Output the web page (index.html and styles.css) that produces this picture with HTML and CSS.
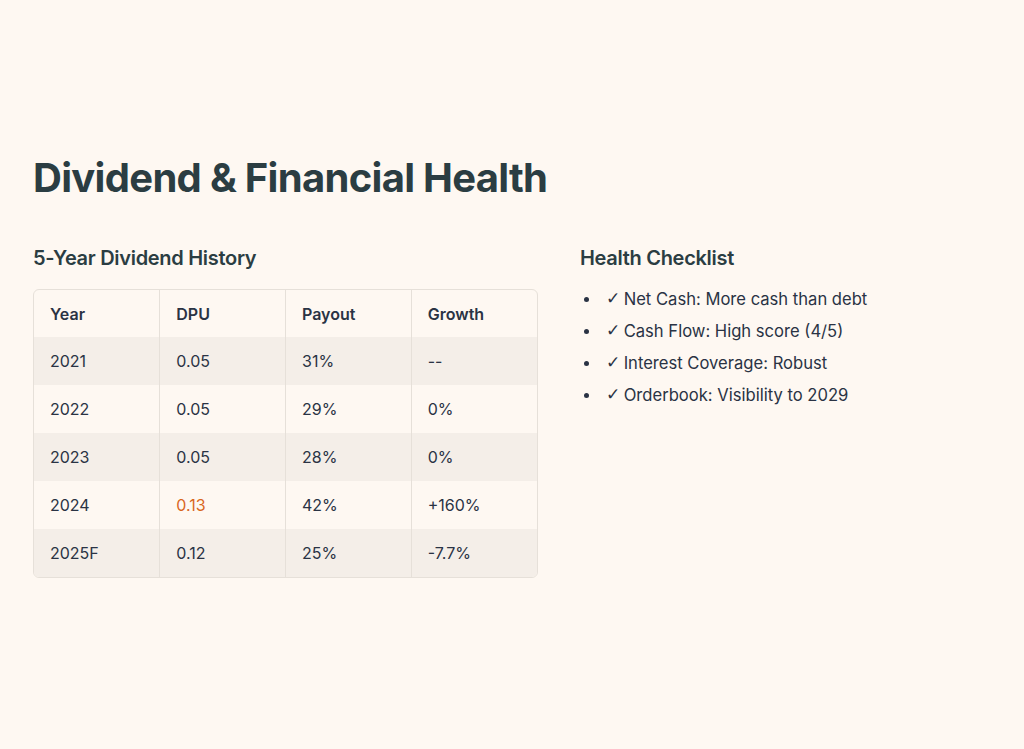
FILE: index.html
```html
<!DOCTYPE html>
<html lang="en">
<head>
<meta charset="utf-8">
<title>Dividend &amp; Financial Health</title>
<link rel="stylesheet" href="styles.css">
</head>
<body>
<main class="page">
  <h1 class="title">Dividend &amp; Financial Health</h1>
  <div class="columns">
    <section class="col-left">
      <h2 class="subtitle">5-Year Dividend History</h2>
      <div class="table-wrap">
        <table class="div-table">
          <thead>
            <tr><th>Year</th><th>DPU</th><th>Payout</th><th>Growth</th></tr>
          </thead>
          <tbody>
            <tr><td>2021</td><td>0.05</td><td>31%</td><td>--</td></tr>
            <tr><td>2022</td><td>0.05</td><td>29%</td><td>0%</td></tr>
            <tr><td>2023</td><td>0.05</td><td>28%</td><td>0%</td></tr>
            <tr><td>2024</td><td class="hl">0.13</td><td>42%</td><td>+160%</td></tr>
            <tr><td>2025F</td><td>0.12</td><td>25%</td><td>-7.7%</td></tr>
          </tbody>
        </table>
      </div>
    </section>
    <section class="col-right">
      <h2 class="subtitle subtitle-right">Health Checklist</h2>
      <ul class="checklist">
        <li><span class="check">✓</span> Net Cash: More cash than debt</li>
        <li><span class="check">✓</span> Cash Flow: High score (4/5)</li>
        <li><span class="check">✓</span> Interest Coverage: Robust</li>
        <li><span class="check">✓</span> Orderbook: Visibility to 2029</li>
      </ul>
    </section>
  </div>
</main>
</body>
</html>
```
FILE: styles.css
```css
* { box-sizing: border-box; }
html, body { margin: 0; padding: 0; }
body {
  background: #fef8f2;
  color: #2c3a44;
  font-family: Inter, "Noto Sans", sans-serif;
}
.page {
  padding: 152px 33px 0 33px;
}
.title {
  margin: 0;
  font-size: 40px;
  line-height: 52px;
  font-weight: 700;
  letter-spacing: -0.7px;
  color: #2b3d42;
}
.columns {
  display: grid;
  grid-template-columns: 505px 1fr;
  column-gap: 42px;
  margin-top: 40px;
}
.subtitle {
  margin: 0 0 17px 0;
  font-size: 20px;
  line-height: 28px;
  font-weight: 600;
  letter-spacing: -0.3px;
  color: #2b3d42;
}
.subtitle-right { margin-bottom: 11px; }
.table-wrap {
  border: 1px solid #e6e0d9;
  border-radius: 6px;
  overflow: hidden;
}
.div-table {
  width: 100%;
  border-collapse: collapse;
  table-layout: fixed;
  font-size: 16px;
}
.div-table th, .div-table td {
  height: 48px;
  padding: 0 16px;
  text-align: left;
  border-left: 1px solid #e6e0d9;
  color: #2a3344;
}
.div-table th:first-child, .div-table td:first-child { border-left: none; }
.div-table th {
  font-weight: 600;
  height: 47px;
}
.div-table td { font-weight: 400; }
.div-table tbody tr:nth-child(odd) { background: #f4eee8; }
.div-table td.hl { color: #d9661c; }
.checklist {
  list-style: none;
  margin: 0;
  padding: 0;
  font-size: 16.6px;
  line-height: 32px;
  color: #2a3344;
}
.checklist li {
  display: flex;
  align-items: center;
  white-space: pre;
}
.checklist li::before {
  content: "";
  width: 5px;
  height: 5px;
  border-radius: 50%;
  background: #2a3344;
  margin-left: 4px;
  margin-right: 17px;
  flex: none;
}
.check {
  font-family: "DejaVu Sans", sans-serif;
  font-weight: 300;
  letter-spacing: -1px;
}
```
